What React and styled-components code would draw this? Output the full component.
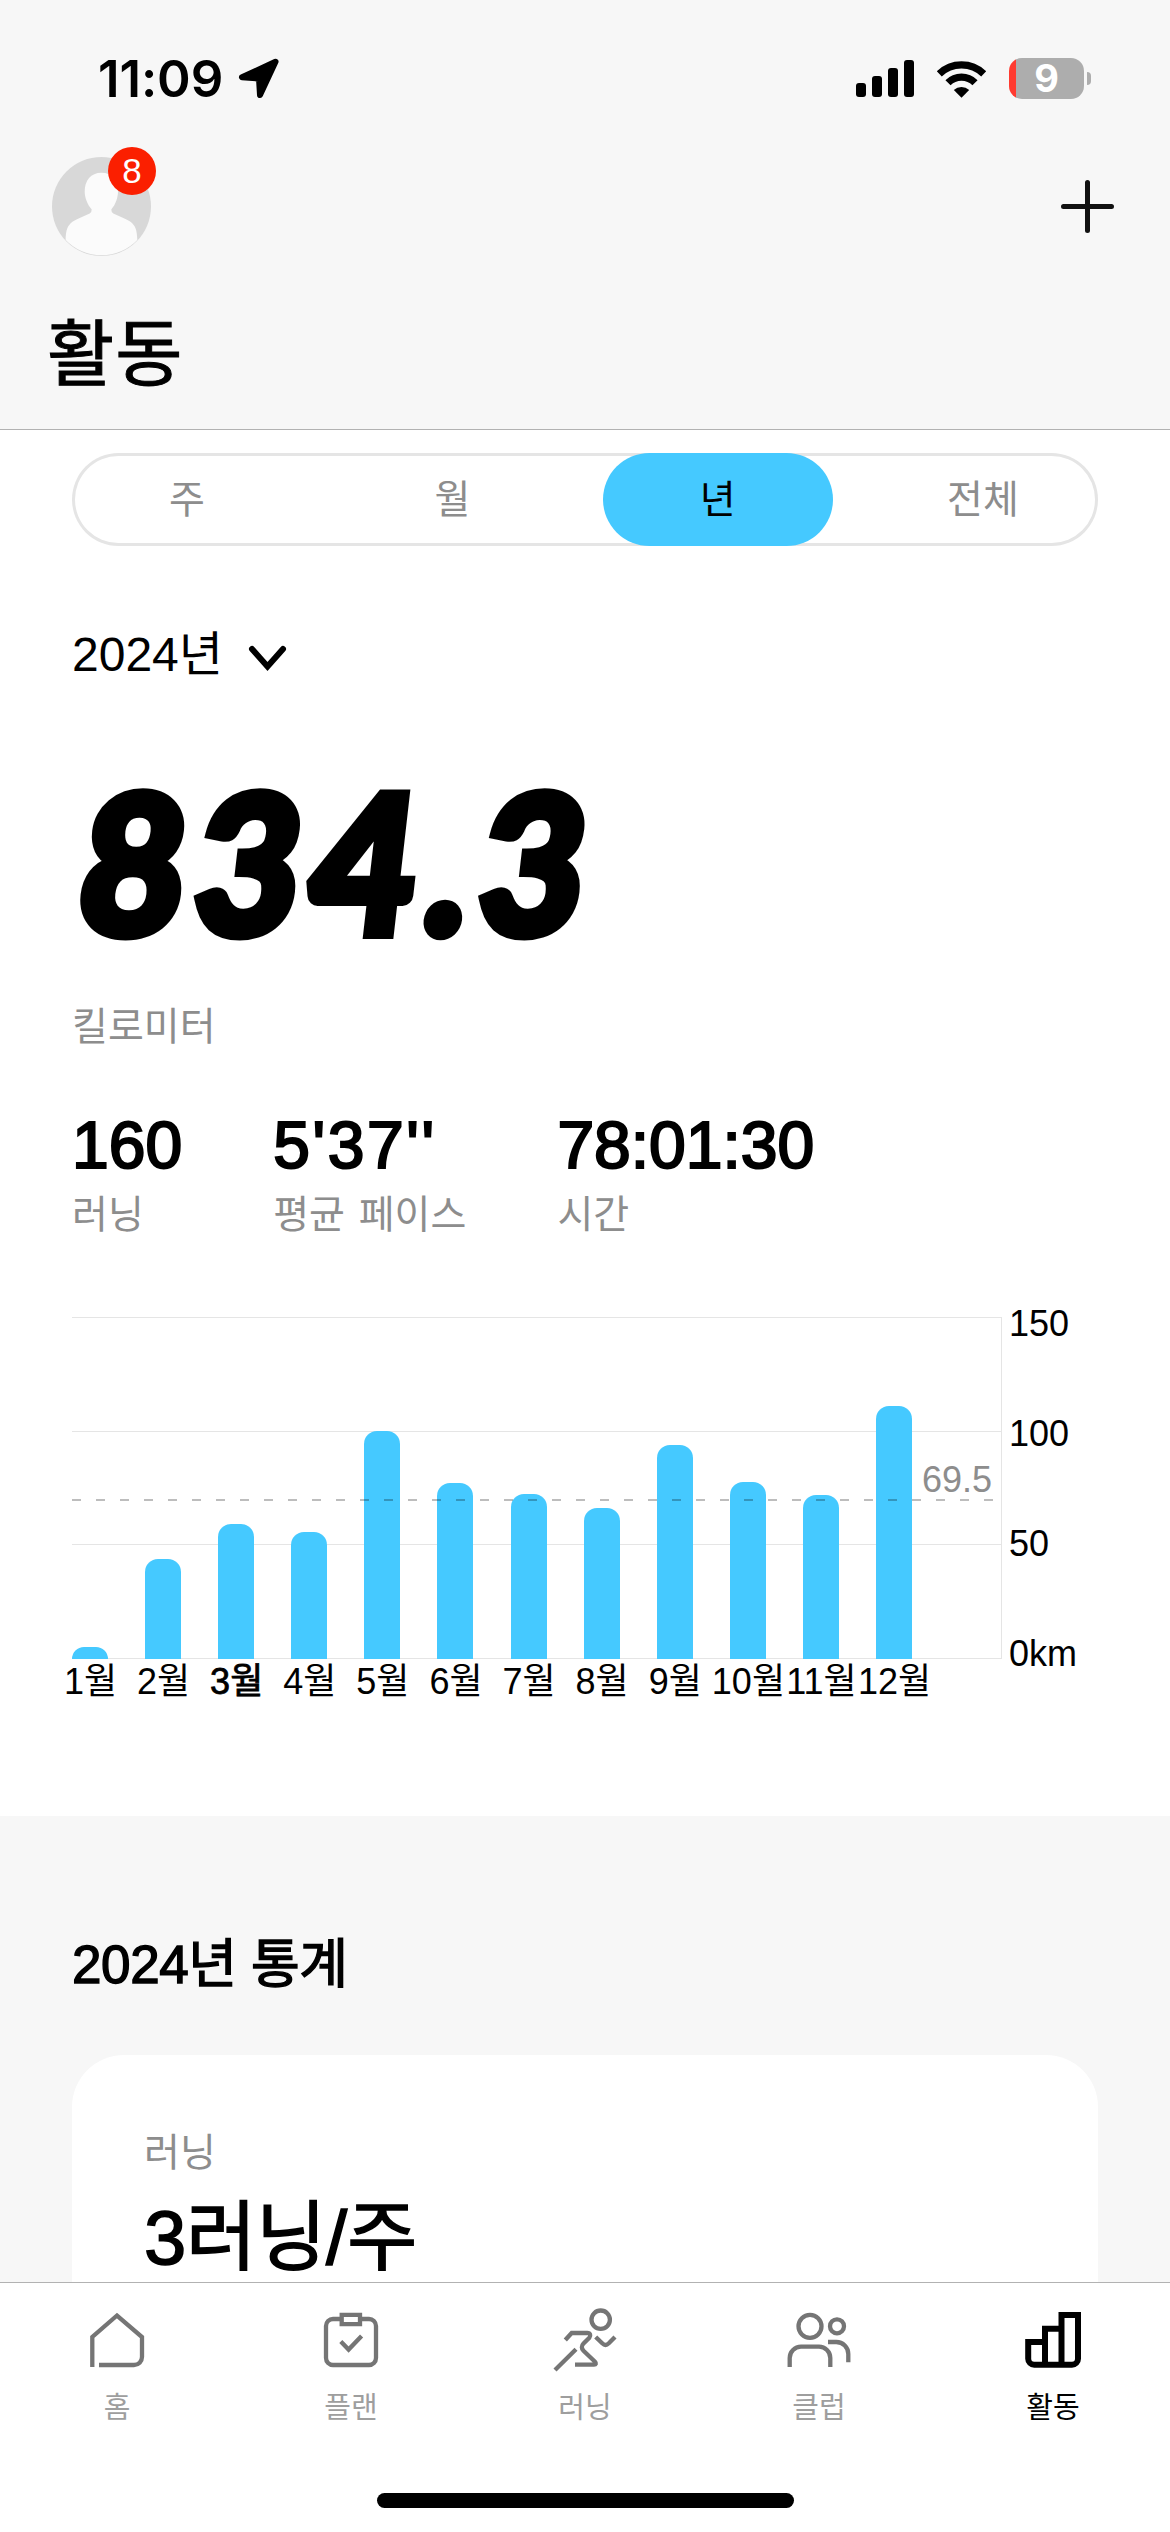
import styled, { createGlobalStyle } from 'styled-components';

const GlobalStyle = createGlobalStyle`
  * {
    box-sizing: border-box;
  }

  body {
    margin: 0;
    background-color: #fff;
    font-family: 'Liberation Sans', 'Noto Sans CJK KR', sans-serif;
    color: #000;
  }
`;

const Screen = styled.div`
  display: flex;
  flex-direction: column;
  width: 1170px;
  height: 2532px;
  overflow: hidden;
  background-color: #fff;
`;

const Header = styled.header`
  height: 430px;
  flex-shrink: 0;
  background-color: #f7f7f7;
  border-bottom: 1px solid #b2b2b2;
`;

const StatusBar = styled.div`
  display: flex;
  align-items: center;
  height: 157px;
  padding: 0 79px 0 98px;
`;

const Clock = styled.span`
  width: 140px;
  font-family: 'Inter', sans-serif;
  font-size: 51px;
  font-weight: 600;
  letter-spacing: -0.1px;
  line-height: 60px;
`;

const StatusIcons = styled.div`
  display: flex;
  align-items: center;
  margin-left: auto;
`;

const Signal = styled.div`
  display: flex;
  align-items: flex-end;
  gap: 6px;
  height: 37px;
  margin-right: 22px;
`;

const SignalBar = styled.span`
  width: 10px;
  height: ${(props) => props.$height}px;
  border-radius: 3px;
  background-color: #000;
`;

const WifiIcon = styled.svg`
  margin-right: 22px;
`;

const Battery = styled.div`
  width: 75px;
  height: 41px;
  border-radius: 13px;
  background: linear-gradient(to right, #ff3b30 7px, #adadad 7px);
  color: #fff;
  font-family: 'Inter', sans-serif;
  font-size: 38px;
  font-weight: 700;
  line-height: 41px;
  text-align: center;
`;

const BatteryCap = styled.span`
  width: 4px;
  height: 13px;
  margin-left: 3px;
  border-radius: 0 6px 6px 0;
  background-color: #adadad;
`;

const NavRow = styled.div`
  display: flex;
  align-items: center;
  justify-content: space-between;
  height: 99px;
  padding: 0 56px 0 52px;
`;

const Avatar = styled.div`
  position: relative;
  width: 99px;
  height: 99px;
`;

const Badge = styled.span`
  position: absolute;
  top: -10px;
  right: -5px;
  width: 48px;
  height: 48px;
  border-radius: 50%;
  background-color: #fb1f00;
  color: #fff;
  font-size: 35px;
  line-height: 48px;
  text-align: center;
`;

const Title = styled.h1`
  margin: 54px 0 0 47px;
  font-size: 73px;
  font-weight: 400;
  letter-spacing: 1px;
  line-height: 90px;
  -webkit-text-stroke: 1px #000;
`;

const Content = styled.main`
  display: flex;
  flex-direction: column;
  flex: 1;
  min-height: 0;
  overflow: hidden;
`;

const Summary = styled.section`
  height: 1386px;
  flex-shrink: 0;
  padding: 23px 72px 0;
`;

const Segments = styled.div`
  display: flex;
  justify-content: space-between;
  height: 93px;
  border-radius: 47px;
  box-shadow: inset 0 0 0 3px #e5e5e5;
`;

const Segment = styled.button`
  width: 230px;
  padding: 0;
  border: none;
  border-radius: 47px;
  background-color: ${(props) => (props.$active ? '#45c9ff' : 'transparent')};
  color: ${(props) => (props.$active ? '#000' : '#8d8d8d')};
  font-family: inherit;
  font-size: 39px;
  line-height: 93px;
`;

const YearPicker = styled.div`
  display: flex;
  align-items: center;
  gap: 25px;
  margin-top: 79px;
  font-size: 48px;
  line-height: 60px;

  svg {
    margin-top: 7px;
  }
`;

/* upright black digits, narrowed and slanted a little less than the font's own italic */
const Distance = styled.div`
  margin: 100px 0 0 11px;
  font-family: 'Lato', sans-serif;
  font-size: 192px;
  font-weight: 900;
  letter-spacing: 12.5px;
  line-height: 150px;
  transform: scaleX(0.93) skewX(-7deg);
  transform-origin: left center;
  -webkit-text-stroke: 10px #000;
`;

const Label = styled.p`
  margin: ${(props) => props.$top || 0}px 0 0;
  color: #8d8d8d;
  font-size: 39px;
  line-height: 50px;
  word-spacing: 3px;
`;

const Stats = styled.div`
  display: flex;
  gap: 91px;
  margin-top: 58px;
`;

const StatValue = styled.div`
  font-size: 66px;
  line-height: 70px;
  letter-spacing: ${(props) => props.$spacing || 0}px;
  -webkit-text-stroke: 2.2px #000;
`;

const Chart = styled.div`
  display: grid;
  grid-template-columns: 930px 1fr;
  margin-top: 77px;
`;

const Plot = styled.div`
  position: relative;
  display: flex;
  align-items: flex-end;
  gap: 37.1px;
  height: 342px;
  border-right: 1px solid #e5e5e5;
`;

const GridLines = styled.div`
  position: absolute;
  inset: 0;
  display: flex;
  flex-direction: column;
  justify-content: space-between;

  span {
    height: 1px;
    background-color: #e5e5e5;
  }
`;

const Bar = styled.div`
  position: relative;
  width: 36px;
  border-radius: 13px 13px 0 0;
  background-color: #45c9ff;
`;

const AverageLine = styled.div`
  position: absolute;
  top: 182px;
  left: 0;
  right: 7px;
  height: 2px;
  background: repeating-linear-gradient(to right, rgba(0, 0, 0, 0.26) 0 9px, transparent 9px 24px);
`;

const AverageValue = styled.span`
  position: absolute;
  top: 143px;
  right: 9px;
  color: #8d8d8d;
  font-size: 36px;
  line-height: 40px;
`;

const Axis = styled.div`
  display: flex;
  flex-direction: column;
  gap: 70px;
  margin: -13px 0 -15px;
  padding-left: 7px;
  font-size: 36px;
  line-height: 40px;
`;

const Months = styled.div`
  display: flex;
  gap: 0.1px;
  margin: 3px 0 0 -18px;
  font-size: 36px;
  line-height: 40px;
`;

const Month = styled.span`
  width: 73px;
  flex-shrink: 0;
  text-align: center;
  white-space: nowrap;
  -webkit-text-stroke: ${(props) => (props.$current ? 0.8 : 0)}px #000;
`;

const Statistics = styled.section`
  flex-shrink: 0;
  padding: 114px 72px 0;
  background-color: #f7f7f7;
`;

const SectionTitle = styled.h2`
  margin: 0 0 55px;
  font-size: 53px;
  font-weight: 400;
  letter-spacing: -0.4px;
  line-height: 70px;
  -webkit-text-stroke: 1.4px #000;
`;

const Card = styled.div`
  height: 400px;
  padding: 73px 72px 0;
  border-radius: 52px;
  background-color: #fff;
`;

const CardValue = styled.div`
  margin-top: 15px;
  font-size: 76px;
  line-height: 90px;
  -webkit-text-stroke: 1.6px #000;
`;

const TabBar = styled.nav`
  display: flex;
  flex-direction: column;
  align-items: center;
  height: 250px;
  flex-shrink: 0;
  border-top: 1px solid #b2b2b2;
  background-color: #fff;
`;

const Tabs = styled.div`
  display: grid;
  grid-template-columns: repeat(5, 1fr);
  width: 100%;
  padding-top: 21px;
`;

const Tab = styled.a`
  display: flex;
  flex-direction: column;
  align-items: center;
  gap: 14px;
  color: ${(props) => (props.$active ? '#000' : '#9e9e9e')};
  font-size: 29px;
  line-height: 36px;

  svg {
    fill: none;
    stroke: ${(props) => (props.$active ? '#000' : '#757575')};
    stroke-width: ${(props) => (props.$active ? 6 : 4.3)};
  }
`;

const HomeIndicator = styled.div`
  width: 417px;
  height: 15px;
  margin-top: 67px;
  border-radius: 8px;
  background-color: #000;
`;

const segments = ['주', '월', '년', '전체'];

const stats = [
  { value: '160', label: '러닝' },
  { value: "5'37''", label: '평균 페이스', spacing: 2.6 },
  { value: '78:01:30', label: '시간' },
];

// height in px of each month's bar
const months = [
  { name: '1월', height: 12 },
  { name: '2월', height: 100 },
  { name: '3월', height: 135 },
  { name: '4월', height: 127 },
  { name: '5월', height: 228 },
  { name: '6월', height: 176 },
  { name: '7월', height: 165 },
  { name: '8월', height: 151 },
  { name: '9월', height: 214 },
  { name: '10월', height: 177 },
  { name: '11월', height: 164 },
  { name: '12월', height: 253 },
];

const tabs = [
  {
    name: '홈',
    icon: <path d="M11.3 63V33L36 11.5 61 33v20a8 8 0 0 1-8 8H18" />,
  },
  {
    name: '플랜',
    icon: (
      <>
        <path d="M26.7 15H18a7 7 0 0 0-7 7v32a7 7 0 0 0 7 7h36a7 7 0 0 0 7-7V22a7 7 0 0 0-7-7h-9" />
        <path d="M26.7 10.8H45v9.4H26.7z" />
        <path d="M25.8 37.6l7.8 8L46.6 32" />
      </>
    ),
  },
  {
    name: '러닝',
    icon: (
      <>
        <circle cx="51.7" cy="15.7" r="9.2" />
        <path d="M16.3 36l6.4-7h15.6c3 0 3.8 2.6 2 4.8L34.5 39.6c-2.2 2.2-2.2 5 0 7.2L46 57.7c1.6 1.6 1 3-1 3H26" />
        <path d="M6 66l21-20.7M46.7 33l6.5 6.3q3.3 3.2 6.6 0L66 33" />
      </>
    ),
  },
  {
    name: '클럽',
    icon: (
      <>
        <circle cx="27" cy="22.3" r="11.5" />
        <circle cx="54" cy="22.3" r="7" />
        <path d="M6.7 63V54a11.3 11.3 0 0 1 11.3-11.3h18A11.3 11.3 0 0 1 47.3 54v9" />
        <path d="M45 38h8.3a12 12 0 0 1 12 12v8.3" />
      </>
    ),
  },
  {
    name: '활동',
    icon: (
      <path d="M28 38H11.2v16.7a6 6 0 0 0 6 6H55a6 6 0 0 0 6-6V11H44.5v50M28 61V24.7h16.5" />
    ),
  },
];

const App = () => {
  return (
    <Screen>
      <GlobalStyle />
      <Header>
        <StatusBar>
          <Clock>11:09</Clock>
          <svg width="42" height="42" viewBox="0 0 42 42">
            <path
              d="M37.5 3.8L4 19.3 21 20.5l1 16.5z"
              stroke="#000"
              strokeWidth="6"
              strokeLinejoin="round"
            />
          </svg>
          <StatusIcons>
            <Signal>
              <SignalBar $height={14} />
              <SignalBar $height={21} />
              <SignalBar $height={29} />
              <SignalBar $height={37} />
            </Signal>
            <WifiIcon width="51" height="40" viewBox="0 0 51 40">
              <g fill="none" stroke="#000" strokeWidth="7.2">
                <path d="M3.3 14.8a32 32 0 0 1 44.4 0" />
                <path d="M12 23.8a19 19 0 0 1 27 0" />
              </g>
              <path d="M17.8 30.9a11.5 11.5 0 0 1 15.4 0L25.5 38.8z" />
            </WifiIcon>
            <Battery>9</Battery>
            <BatteryCap />
          </StatusIcons>
        </StatusBar>
        <NavRow>
          <Avatar>
            <svg width="99" height="99" viewBox="0 0 99 99">
              <circle cx="49.5" cy="49.5" r="49.5" fill="#d8d8d8" />
              <path
                d="M13.7 83c0-15 5-18 14-22l10-4.5q2-1 2-4C35 47 32.7 40 32.7 34.5c0-11 6-18.8 16.8-18.8S66 23.5 66 34.5c0 5.5-2 12.5-6.7 18q0 3 2 4l10 4.5c9 4 14 7 14 22a49.5 49.5 0 0 1-71.6 0z"
                fill="#fbfbfb"
              />
            </svg>
            <Badge>8</Badge>
          </Avatar>
          <svg width="53" height="53" viewBox="0 0 53 53">
            <path d="M26.5 2.5v48M2.5 26.5h48" stroke="#111" strokeWidth="5" strokeLinecap="round" />
          </svg>
        </NavRow>
        <Title>활동</Title>
      </Header>

      <Content>
        <Summary>
          <Segments>
            {segments.map((name) => (
              <Segment key={name} $active={name === '년'}>
                {name}
              </Segment>
            ))}
          </Segments>

          <YearPicker>
            2024년
            <svg width="40" height="28" viewBox="0 0 40 28">
              <path d="M4 4l15.5 17.5L35 4" fill="none" stroke="#000" strokeWidth="6" strokeLinecap="round" />
            </svg>
          </YearPicker>

          <Distance>834.3</Distance>
          <Label $top={67}>킬로미터</Label>

          <Stats>
            {stats.map((stat) => (
              <div key={stat.label}>
                <StatValue $spacing={stat.spacing}>{stat.value}</StatValue>
                <Label $top={10}>{stat.label}</Label>
              </div>
            ))}
          </Stats>

          <Chart>
            <Plot>
              <GridLines>
                <span />
                <span />
                <span />
                <span />
              </GridLines>
              {months.map((month) => (
                <Bar key={month.name} style={{ height: month.height }} />
              ))}
              <AverageLine />
              <AverageValue>69.5</AverageValue>
            </Plot>
            <Axis>
              <span>150</span>
              <span>100</span>
              <span>50</span>
              <span>0km</span>
            </Axis>
          </Chart>
          <Months>
            {months.map((month) => (
              <Month key={month.name} $current={month.name === '3월'}>
                {month.name}
              </Month>
            ))}
          </Months>
        </Summary>

        <Statistics>
          <SectionTitle>2024년 통계</SectionTitle>
          <Card>
            <Label>러닝</Label>
            <CardValue>3러닝/주</CardValue>
          </Card>
        </Statistics>
      </Content>

      <TabBar>
        <Tabs>
          {tabs.map((tab) => (
            <Tab key={tab.name} $active={tab.name === '활동'}>
              <svg width="72" height="72" viewBox="0 0 72 72">
                {tab.icon}
              </svg>
              {tab.name}
            </Tab>
          ))}
        </Tabs>
        <HomeIndicator />
      </TabBar>
    </Screen>
  );
};

export default App;
